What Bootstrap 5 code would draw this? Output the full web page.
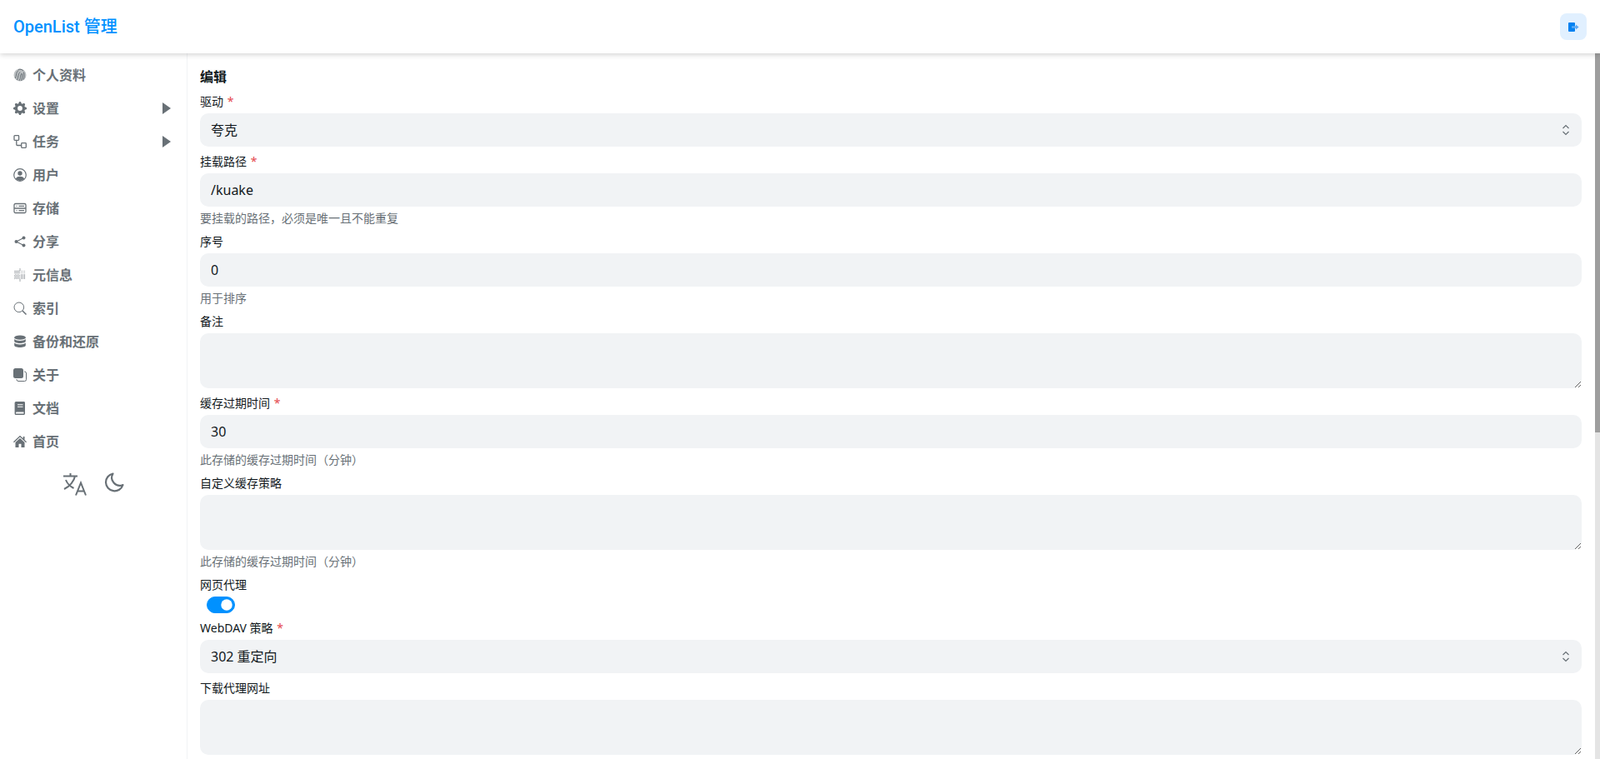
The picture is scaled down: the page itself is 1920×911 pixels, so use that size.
<!DOCTYPE html>
<html lang="zh">
<head>
<meta charset="utf-8">
<title>OpenList 管理</title>
<link href="https://cdn.jsdelivr.net/npm/bootstrap@5.3.3/dist/css/bootstrap.min.css" rel="stylesheet">
<style>
  html, body { height: 100%; overflow: hidden; }
  body { font-family: "Noto Sans", "Noto Sans CJK SC", sans-serif; font-size: 16px; color: #11181c; background: #fff; }
  .app-header { height: 64px; padding: 0 16px; background: #fff; box-shadow: 0 2px 6px rgba(0, 0, 0, .16); position: relative; z-index: 2; }
  .app-title { font-family: Roboto, "Noto Sans CJK SC", sans-serif; font-size: 20px; font-weight: 500; color: #0091ff; line-height: 1; }
  .logout-btn { width: 32px; height: 32px; border: 0; border-radius: 8px; background: #e1f0ff; color: #0081f1; padding: 0; }
  .app-body { height: calc(100vh - 64px); }
  .side-menu { width: 225px; flex: none; border-right: 1px solid #f1f3f5; padding-top: 6px; }
  .side-link { height: 40px; padding: 0 16px; color: #687076; font-weight: 600; text-decoration: none; gap: 7px; line-height: 1; }
  .side-link svg { width: 16px; height: 16px; flex: none; }
  .side-tools { gap: 21px; padding-top: 17px; color: #687076; }
  .main-pane { overflow: hidden; padding: 16px 16px 16px 15px; min-width: 0; }
  .scroll-rail { width: 6px; flex: none; background: #e4e4e4; }
  .scroll-thumb { height: 455px; background: #9e9e9e; }
  .edit-title { font-size: 16px; font-weight: 700; line-height: 24px; margin: 0; }
  .field-label { font-size: 14px; font-weight: 400; line-height: 20px; margin: 0 0 4px; display: block; }
  .field-label i { font-style: normal; color: #e5484d; margin-left: 1px; }
  .field-help { font-size: 14px; line-height: 20px; margin-top: 4px; color: #687076; }
  .field-input.form-control, .field-input.form-select { height: 40px; background-color: #f1f3f5; border: 0; border-radius: 10px; padding: 0 13px; font-size: 16px; color: #11181c; box-shadow: none; }
  .field-input.form-select { background-image: none; }
  .select-wrap { position: relative; }
  .select-caret { position: absolute; right: 11px; top: 12px; width: 16px; height: 16px; color: #687076; pointer-events: none; }
  textarea.field-input.form-control { height: 66px; min-height: 66px; padding: 8px 13px; }
  .field-switch.form-check { height: 20px; min-height: 0; padding: 0; margin: 0 0 0 8px; }
  .field-switch .form-check-input { width: 34px; height: 20px; margin: 0; float: none; display: block; background-color: #0091ff; border-color: #0091ff; }
</style>
</head>
<body>
<header class="app-header d-flex align-items-center justify-content-between">
  <span class="app-title">OpenList 管理</span>
  <button type="button" class="logout-btn d-flex align-items-center justify-content-center" aria-label="退出">
    <svg width="13" height="11" viewBox="0 0 13 11"><path fill="currentColor" d="M0 1a1 1 0 0 1 1-1h6a1 1 0 0 1 1 1v9a1 1 0 0 1-1 1H1a1 1 0 0 1-1-1z"/><path fill="#5aa9f5" d="M4 4.300h5V2.500l3.600 3-3.600 3V6.700H4z"/></svg>
  </button>
</header>

<div class="app-body d-flex">
  <nav class="side-menu d-flex flex-column">
    <a class="side-link d-flex align-items-center" href="#">
      <svg viewBox="0 0 16 16" fill="none" stroke="currentColor" stroke-width="1"><circle cx="8" cy="8" r="7.500" fill="currentColor" stroke="none" opacity=".45"/><path d="M2.500 12c1.500-4 .5-7 3.500-9.500M4.500 14c2-3.500 .5-7 3.500-9.500M7 15c2-3 1-6.500 3-9M9.500 15c1-2.500 1.500-5 1.500-8.500M12 13.500c1-2.500 1.500-5 .5-9M6 1.500c2-.5 4-.5 6 1.500"/></svg>
      <span>个人资料</span>
    </a>
    <a class="side-link d-flex align-items-center" href="#">
      <svg viewBox="0 0 16 16" fill="currentColor"><path fill-rule="evenodd" d="M9.400 1.100c-.4-1.470-2.400-1.470-2.800 0l-.1.340a1.460 1.460 0 0 1-2.100.9l-.31-.17c-1.340-.73-2.750.68-2.020 2.020l.17.31a1.460 1.460 0 0 1-.9 2.100l-.34.1c-1.470.4-1.470 2.400 0 2.800l.34.1a1.460 1.460 0 0 1 .9 2.100l-.17.310c-.73 1.340.68 2.750 2.020 2.020l.31-.17a1.460 1.460 0 0 1 2.100.9l.1.340c.4 1.470 2.400 1.470 2.800 0l.1-.34a1.460 1.460 0 0 1 2.100-.9l.31.17c1.340.73 2.750-.68 2.020-2.020l-.17-.31a1.460 1.460 0 0 1 .9-2.100l.34-.1c1.470-.4 1.470-2.400 0-2.800l-.34-.1a1.460 1.460 0 0 1-.9-2.100l.17-.31c.73-1.340-.68-2.750-2.020-2.020l-.31.17a1.460 1.460 0 0 1-2.100-.9zM8 10.900a2.900 2.900 0 1 1 0-5.800 2.900 2.900 0 0 1 0 5.800z"/></svg>
      <span>设置</span>
      <svg class="ms-auto" viewBox="0 0 16 16" fill="currentColor"><path d="M3 1l10 7-10 7z"/></svg>
    </a>
    <a class="side-link d-flex align-items-center" href="#">
      <svg viewBox="0 0 16 16" fill="none" stroke="currentColor" stroke-width="1.300"><rect x="1" y=".7" width="5.600" height="5.600" rx=".7"/><rect x="9.700" y="9.700" width="5.600" height="5.600" rx=".7"/><path d="M3.800 6.300v5.200a1 1 0 0 0 1 1h4.900"/></svg>
      <span>任务</span>
      <svg class="ms-auto" viewBox="0 0 16 16" fill="currentColor"><path d="M3 1l10 7-10 7z"/></svg>
    </a>
    <a class="side-link d-flex align-items-center" href="#">
      <svg viewBox="0 0 16 16"><circle cx="8" cy="8" r="7.300" fill="none" stroke="currentColor" stroke-width="1.200"/><circle cx="8" cy="6" r="2.700" fill="currentColor"/><path fill="currentColor" d="M2.800 12.500c1-2 3-2.700 5.200-2.700s4.200.7 5.200 2.700A7 7 0 0 1 8 15a7 7 0 0 1-5.200-2.500z"/></svg>
      <span>用户</span>
    </a>
    <a class="side-link d-flex align-items-center" href="#">
      <svg viewBox="0 0 16 16" fill="none" stroke="currentColor" stroke-width="1.300"><rect x="1" y="2.500" width="14" height="11" rx="1.500"/><path d="M1 8h14M6.500 5.300h6.500M6.500 10.700h6.500"/><path d="M3 5.300h2M3 10.700h2" opacity=".5"/></svg>
      <span>存储</span>
    </a>
    <a class="side-link d-flex align-items-center" href="#">
      <svg viewBox="0 0 16 16" fill="currentColor"><circle cx="12.500" cy="3.500" r="2"/><circle cx="12.500" cy="12.500" r="2"/><circle cx="3.500" cy="8" r="2"/><path d="M3.500 8l9-4.500M3.500 8l9 4.500" stroke="currentColor" stroke-width="1.200"/></svg>
      <span>分享</span>
    </a>
    <a class="side-link d-flex align-items-center" href="#">
      <svg viewBox="0 0 16 16" fill="none" stroke="currentColor" opacity=".6"><path stroke-width="1" stroke-dasharray="1 1" d="M1 3.500h14M1 5.500h14M1 8.500h14M1 10.500h14M1 12.500h14M2.500 3v10M4.500 3v10M6.500 3v10M9.500 3v10M11.500 3v10M13.500 3v10"/><path stroke-width="1" d="M8 0v3M8 13v3"/></svg>
      <span>元信息</span>
    </a>
    <a class="side-link d-flex align-items-center" href="#">
      <svg viewBox="0 0 16 16" fill="none" stroke="currentColor" stroke-width="1"><circle cx="6.800" cy="6.800" r="5.800"/><path d="M11 11l4.500 4.500" stroke-width="1.500"/></svg>
      <span>索引</span>
    </a>
    <a class="side-link d-flex align-items-center" href="#">
      <svg viewBox="0 0 16 16" fill="currentColor"><ellipse cx="8" cy="3.200" rx="6.800" ry="2.600"/><path d="M1.200 5v2.600c0 1.400 3 2.500 6.800 2.500s6.800-1.100 6.800-2.500V5c-1.200 1.300-3.900 2-6.800 2s-5.600-.7-6.800-2z"/><path d="M1.200 9.600v2.800c0 1.400 3 2.500 6.800 2.500s6.800-1.100 6.800-2.500V9.600c-1.200 1.300-3.900 2-6.800 2s-5.600-.7-6.800-2z"/></svg>
      <span>备份和还原</span>
    </a>
    <a class="side-link d-flex align-items-center" href="#">
      <svg viewBox="0 0 16 16"><rect x="0" y="0" width="12" height="12" rx="2.500" fill="currentColor"/><path d="M13 4h.5A2 2 0 0 1 15.500 6v7.500a2 2 0 0 1-2 2H6a2 2 0 0 1-2-2V13" fill="none" stroke="currentColor" stroke-width="1"/></svg>
      <span>关于</span>
    </a>
    <a class="side-link d-flex align-items-center" href="#">
      <svg viewBox="0 0 16 16"><path fill="currentColor" fill-rule="evenodd" d="M3.200 0h9.400a1.400 1.400 0 0 1 1.400 1.400v13.200a1.400 1.400 0 0 1-1.400 1.400H3.200A1.600 1.600 0 0 1 1.600 14.400V1.600A1.600 1.600 0 0 1 3.200 0zM5 3.200v1h6.500v-1zM5 5.700v1h6.500v-1zM3 13.200v1.200h9.500v-1.800H3.600z"/></svg>
      <span>文档</span>
    </a>
    <a class="side-link d-flex align-items-center" href="#">
      <svg viewBox="0 0 16 16" fill="currentColor"><path d="M8 .8L0 8.300l.9.900L8 2.600l7.100 6.600.9-.9-2.500-2.300V2h-1.800v2.200z"/><path d="M8 4L2.500 9.100V15h4v-4.200h3V15h4V9.100z"/></svg>
      <span>首页</span>
    </a>
    <div class="side-tools d-flex justify-content-center">
      <svg width="28" height="28" viewBox="0 0 28 28" fill="none" stroke="currentColor" stroke-width="2"><path d="M0 4.500h17M8.500 1v3.500M14 4.500C13 10 8 17 1 20M3 9c1.500 4 5.500 8 9.500 10"/><path d="M15 27.500l6-15 6 15M17 22.500h8"/></svg>
      <svg width="24" height="24" viewBox="0 0 24 24" fill="none" stroke="currentColor" stroke-width="2.200" stroke-linejoin="round"><path d="M10.500 1.500a10.500 10.500 0 1 0 12 13.500a9.500 9.500 0 0 1-12-13.500z"/></svg>
    </div>
  </nav>

  <main class="main-pane flex-grow-1 d-flex flex-column gap-2">
    <h1 class="edit-title">编辑</h1>

    <div>
      <label class="field-label">驱动 <i>*</i></label>
      <div class="select-wrap">
        <select class="form-select field-input"><option>夸克</option></select>
        <svg class="select-caret" viewBox="0 0 16 16" fill="none" stroke="currentColor" stroke-width="1.200"><path d="M4.500 6L8 2.500 11.500 6M4.500 10L8 13.500 11.500 10"/></svg>
      </div>
    </div>

    <div>
      <label class="field-label">挂载路径 <i>*</i></label>
      <input class="form-control field-input" type="text" value="/kuake">
      <div class="field-help">要挂载的路径，必须是唯一且不能重复</div>
    </div>

    <div>
      <label class="field-label">序号</label>
      <input class="form-control field-input" type="text" value="0">
      <div class="field-help">用于排序</div>
    </div>

    <div>
      <label class="field-label">备注</label>
      <textarea class="form-control field-input d-block"></textarea>
    </div>

    <div>
      <label class="field-label">缓存过期时间 <i>*</i></label>
      <input class="form-control field-input" type="text" value="30">
      <div class="field-help">此存储的缓存过期时间（分钟）</div>
    </div>

    <div>
      <label class="field-label">自定义缓存策略</label>
      <textarea class="form-control field-input d-block"></textarea>
      <div class="field-help">此存储的缓存过期时间（分钟）</div>
    </div>

    <div>
      <label class="field-label">网页代理</label>
      <div class="form-check form-switch field-switch">
        <input class="form-check-input" type="checkbox" role="switch" checked>
      </div>
    </div>

    <div>
      <label class="field-label">WebDAV 策略 <i>*</i></label>
      <div class="select-wrap">
        <select class="form-select field-input"><option>302 重定向</option></select>
        <svg class="select-caret" viewBox="0 0 16 16" fill="none" stroke="currentColor" stroke-width="1.200"><path d="M4.500 6L8 2.500 11.500 6M4.500 10L8 13.500 11.500 10"/></svg>
      </div>
    </div>

    <div>
      <label class="field-label">下载代理网址</label>
      <textarea class="form-control field-input d-block"></textarea>
    </div>
  </main>
  <div class="scroll-rail"><div class="scroll-thumb"></div></div>
</div>
<script src="https://cdn.jsdelivr.net/npm/bootstrap@5.3.3/dist/js/bootstrap.bundle.min.js"></script>
</body>
</html>
